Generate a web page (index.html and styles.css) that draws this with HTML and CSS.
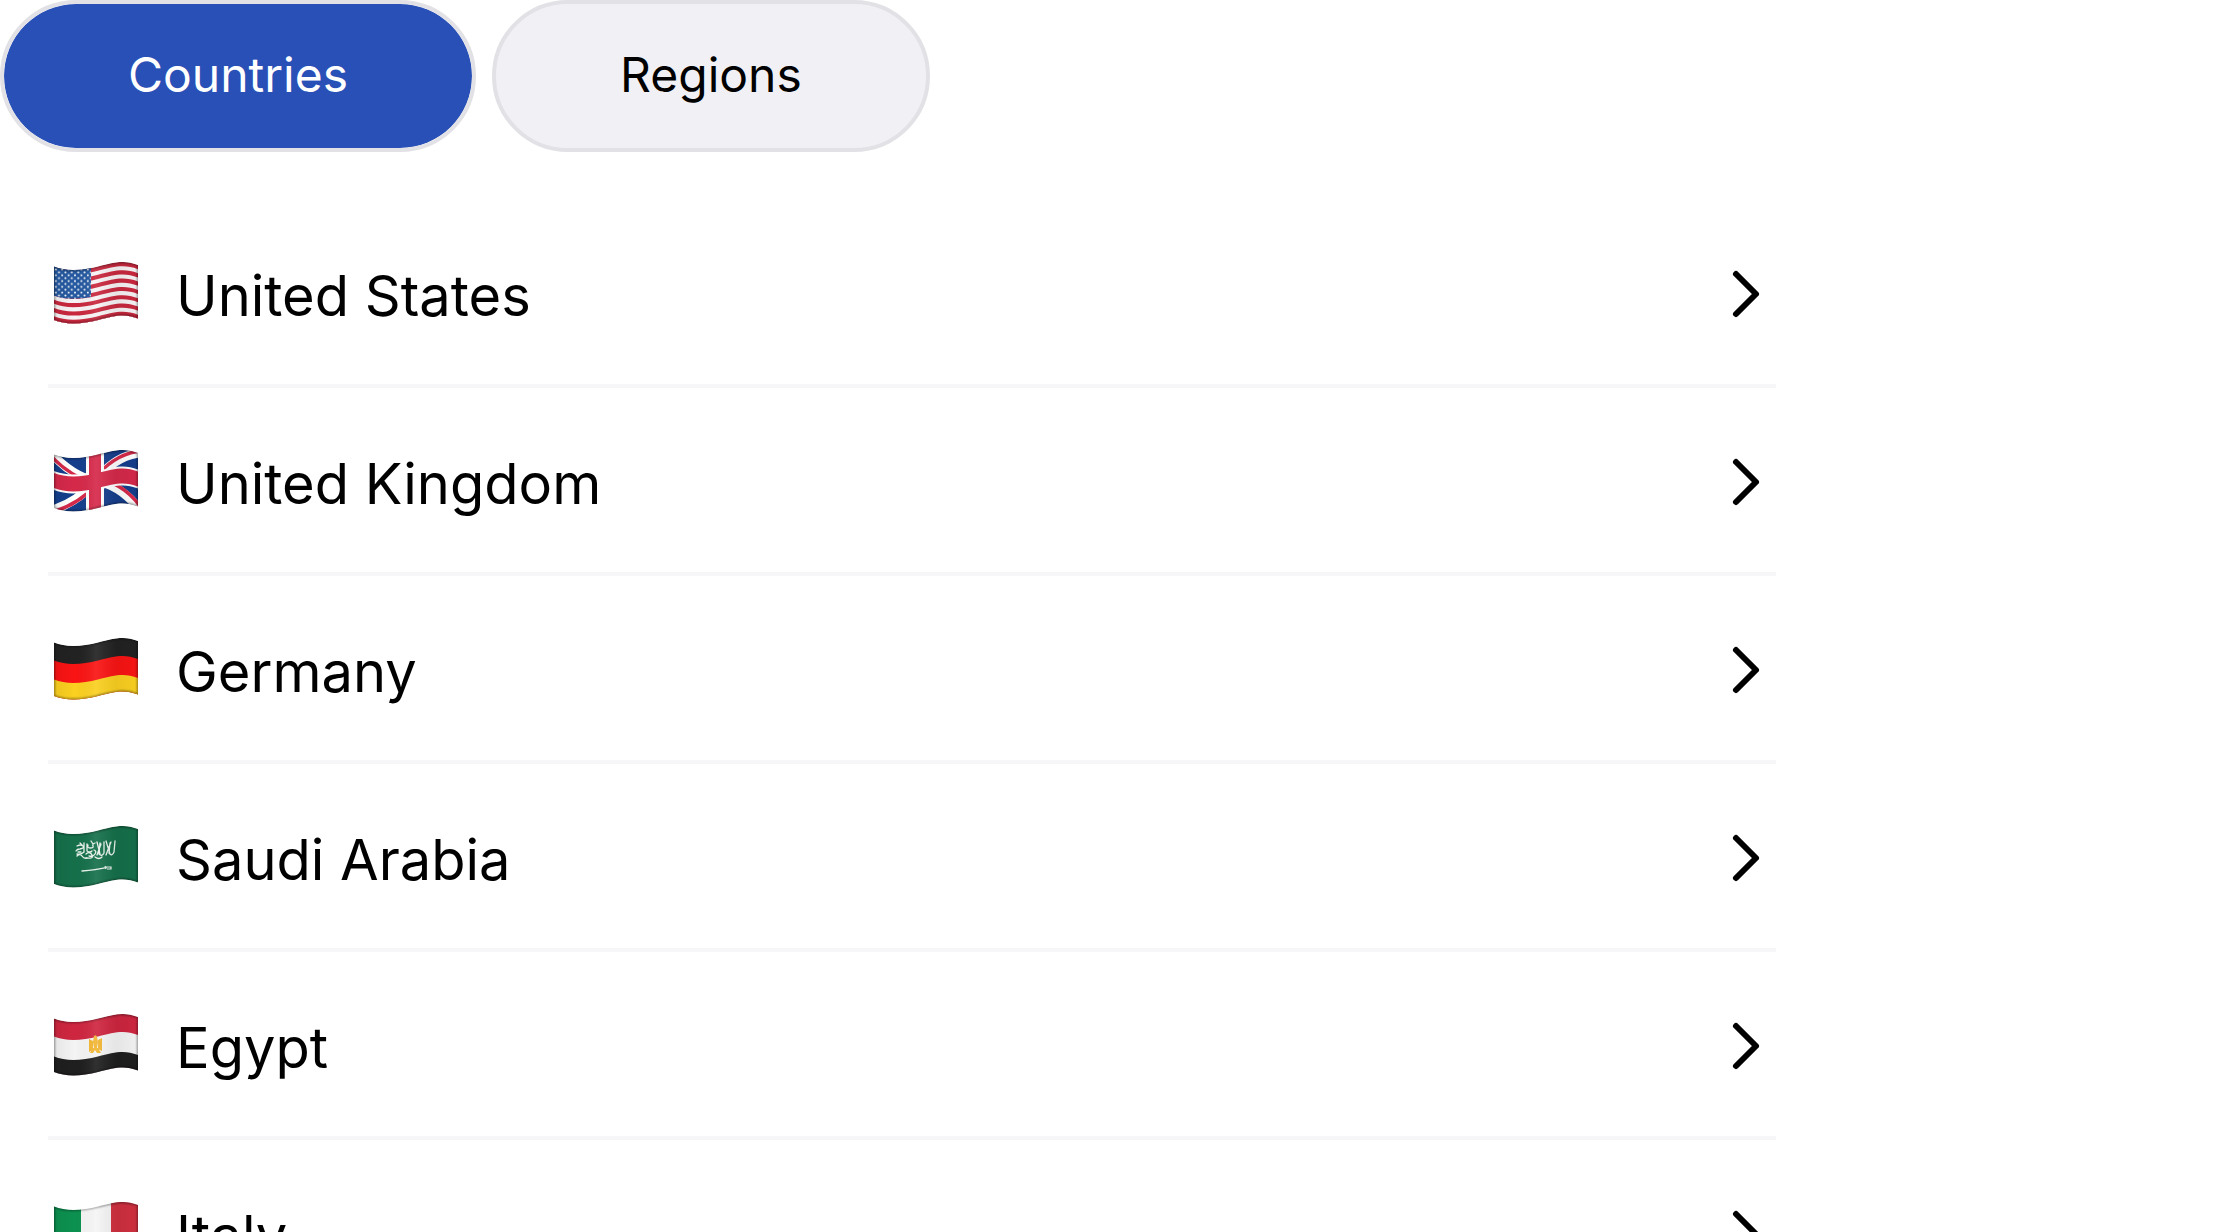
FILE: index.html
```html
<!DOCTYPE html>
<html lang="en">
<head>
    <meta charset="UTF-8">
    <meta name="viewport" content="width=device-width, initial-scale=1.0">
    <title>Countries</title>
    <link rel="stylesheet" href="styles.css">
</head>
<body>
    <!-- Shared shapes for the flags and arrows -->
    <svg class="defs" width="0" height="0" aria-hidden="true">
        <defs>
            <path id="wave" d="M6 12.500c12 5 28 4 44 0c16-4 26-7 40-1.5v53.500c-14-5.5-24-2.5-40 1.5c-16 4-32 5-44 0z"/>
            <clipPath id="flag-clip"><use href="#wave"/></clipPath>
            <linearGradient id="fold" x1="0" x2="1" y1="0" y2="0">
                <stop offset="0" stop-color="#000" stop-opacity="0.06"/>
                <stop offset="0.25" stop-color="#000" stop-opacity="0"/>
                <stop offset="0.5" stop-color="#fff" stop-opacity="0.08"/>
                <stop offset="0.75" stop-color="#000" stop-opacity="0.06"/>
                <stop offset="1" stop-color="#000" stop-opacity="0.02"/>
            </linearGradient>
            <filter id="soften"><feGaussianBlur stdDeviation="0.9"/></filter>
            <pattern id="stars" x="6" y="14" width="6.4" height="5.8" patternUnits="userSpaceOnUse">
                <circle cx="1.8" cy="1.5" r="1" fill="#fff"/>
                <circle cx="5" cy="4.4" r="1" fill="#fff"/>
            </pattern>
            <g id="shade">
                <use href="#wave" fill="url(#fold)"/>
                <use href="#wave" fill="none" stroke="#000" stroke-opacity="0.5" stroke-width="1.8" filter="url(#soften)"/>
            </g>
            <symbol id="chevron" viewBox="0 0 64 64">
                <path d="M24 12l20 20l-20 20" fill="none" stroke="#000" stroke-width="6" stroke-linecap="round" stroke-linejoin="round"/>
            </symbol>
        </defs>
    </svg>

    <div class="container">
        <div class="tabs">
            <button type="button" class="tab active">Countries</button>
            <button type="button" class="tab">Regions</button>
        </div>

        <ul class="country-list">
            <li>
                <a href="#us" class="country">
                    <svg class="flag" viewBox="0 0 96 80" aria-hidden="true">
                        <g clip-path="url(#flag-clip)">
                            <use href="#wave" fill="#c9283e"/>
                            <use href="#wave" y="4.15" fill="#f7f3f5"/>
                            <use href="#wave" y="8.3" fill="#c9283e"/>
                            <use href="#wave" y="12.45" fill="#f7f3f5"/>
                            <use href="#wave" y="16.6" fill="#c9283e"/>
                            <use href="#wave" y="20.75" fill="#f7f3f5"/>
                            <use href="#wave" y="24.9" fill="#c9283e"/>
                            <use href="#wave" y="29.05" fill="#f7f3f5"/>
                            <use href="#wave" y="33.2" fill="#c9283e"/>
                            <use href="#wave" y="37.35" fill="#f7f3f5"/>
                            <use href="#wave" y="41.5" fill="#c9283e"/>
                            <use href="#wave" y="45.65" fill="#f7f3f5"/>
                            <use href="#wave" y="49.8" fill="#c9283e"/>
                            <path d="M6 12c10 4 23 4 37 1.500v29.500c-14 2.5-27 2.5-37-1.5z" fill="#2458a0"/>
                            <path d="M6 12c10 4 23 4 37 1.500v29.500c-14 2.5-27 2.5-37-1.5z" fill="url(#stars)"/>
                            <use href="#shade"/>
                        </g>
                    </svg>
                    <span class="name">United States</span>
                    <svg class="arrow" aria-hidden="true"><use href="#chevron"/></svg>
                </a>
            </li>
            <li>
                <a href="#gb" class="country">
                    <svg class="flag" viewBox="0 0 96 80" aria-hidden="true">
                        <g clip-path="url(#flag-clip)">
                            <use href="#wave" fill="#153e8c"/>
                            <g fill="none" stroke="#fff" stroke-width="9">
                                <path d="M4 12Q24 34 47 39Q72 42 92 68"/>
                                <path d="M4 68Q28 61 47 40Q66 14 92 11"/>
                            </g>
                            <g fill="none" stroke="#d6294a" stroke-width="3.4">
                                <path d="M4 15Q22 34 47 42"/>
                                <path d="M47 36Q74 40 92 64"/>
                                <path d="M4 70Q30 63 49 42"/>
                                <path d="M45 38Q66 12 92 9"/>
                            </g>
                            <path d="M38 0h18v80h-18z" fill="#fff"/>
                            <path d="M6 29c12 5 28 4 44 0c16-4 26-7 40-1.5v19c-14-5.5-24-2.5-40 1.5c-16 4-32 5-44 0z" fill="#fff"/>
                            <path d="M6 31c12 5 28 4 44 0c16-4 26-7 40-1.5v15c-14-5.5-24-2.5-40 1.5c-16 4-32 5-44 0z" fill="#d6294a"/>
                            <path d="M41 0h12v80h-12z" fill="#d6294a"/>
                            <use href="#shade"/>
                        </g>
                    </svg>
                    <span class="name">United Kingdom</span>
                    <svg class="arrow" aria-hidden="true"><use href="#chevron"/></svg>
                </a>
            </li>
            <li>
                <a href="#de" class="country">
                    <svg class="flag" viewBox="0 0 96 80" aria-hidden="true">
                        <g clip-path="url(#flag-clip)">
                            <use href="#wave" fill="#222222"/>
                            <use href="#wave" y="18" fill="#fa1414"/>
                            <use href="#wave" y="37" fill="#fbd020"/>
                            <use href="#shade"/>
                        </g>
                    </svg>
                    <span class="name">Germany</span>
                    <svg class="arrow" aria-hidden="true"><use href="#chevron"/></svg>
                </a>
            </li>
            <li>
                <a href="#sa" class="country">
                    <svg class="flag" viewBox="0 0 96 80" aria-hidden="true">
                        <g clip-path="url(#flag-clip)">
                            <use href="#wave" fill="#15704a"/>
                            <!-- calligraphy emblem -->
                            <g fill="none" stroke="#e9f3ee" stroke-width="1.3" stroke-linecap="round">
                                <path d="M67 23l-1 11q-2 5-5 1l1-10M63 24l-5 13M58 23l4 13M56 24v11q-2 4-5 1l1-11M53 26l-4 11M49 24l3 12"/>
                                <path d="M47 25q-3 1-2 3t-3 2q-3 0-2-3M46 32q3 1 1 4t-6 2M43 23l2 3M39 26v7q3 2 5 0M38 36q4-3 6 1t-6 3"/>
                                <path d="M29 28q4-2 6 0t-3 3q-3 0-4 2M36 25v9q-3 3-7 2M29 38q3-3 5 0t5 2M32 25l2 2M30 34h3M47 39q4 3 7 0"/>
                            </g>
                            <path d="M34 53q14-1 24-3.400" fill="none" stroke="#e9f3ee" stroke-width="1.4" stroke-linecap="round"/>
                            <path d="M57 48l1 3M58 49h5v2h-4" fill="none" stroke="#e9f3ee" stroke-width="1.2"/>
                            <use href="#shade"/>
                        </g>
                    </svg>
                    <span class="name">Saudi Arabia</span>
                    <svg class="arrow" aria-hidden="true"><use href="#chevron"/></svg>
                </a>
            </li>
            <li>
                <a href="#eg" class="country">
                    <svg class="flag" viewBox="0 0 96 80" aria-hidden="true">
                        <g clip-path="url(#flag-clip)">
                            <use href="#wave" fill="#cf2640"/>
                            <use href="#wave" y="18" fill="#f4f4f4"/>
                            <use href="#wave" y="38" fill="#1f1f1f"/>
                            <!-- eagle -->
                            <g fill="#f2b632">
                                <path d="M41 33l4 2v9l-4 2zM54 32l-4 2v9l4 2z"/>
                                <path d="M46 30q2-2 3 1l1 5l-1 6h-3l-1-6z"/>
                                <path d="M45 42l-3 5h3l2-3l2 3h4l-3-5z"/>
                            </g>
                            <use href="#shade"/>
                        </g>
                    </svg>
                    <span class="name">Egypt</span>
                    <svg class="arrow" aria-hidden="true"><use href="#chevron"/></svg>
                </a>
            </li>
            <li>
                <a href="#it" class="country">
                    <svg class="flag" viewBox="0 0 96 80" aria-hidden="true">
                        <g clip-path="url(#flag-clip)">
                            <use href="#wave" fill="#f5f5f5"/>
                            <path d="M6 0h27v80h-27z" fill="#0c9150"/>
                            <path d="M63 0h27v80h-27z" fill="#d03040"/>
                            <use href="#shade"/>
                        </g>
                    </svg>
                    <span class="name">Italy</span>
                    <svg class="arrow" aria-hidden="true"><use href="#chevron"/></svg>
                </a>
            </li>
        </ul>
    </div>
</body>
</html>
```
FILE: styles.css
```css
* {
    box-sizing: border-box;
}

body {
    height: 100vh;
    margin: 0;
    overflow: hidden;
    background: #fff;
    color: #000;
    font-family: Inter, "Liberation Sans", sans-serif;
}

.defs {
    position: absolute;
}

.container {
    width: 100%;
    max-width: 1824px;
}

.tabs {
    display: flex;
    gap: 16px;
}

.tab {
    padding: 39px 124px 41px;
    border: 4px solid #e2e2e6;
    border-radius: 76px;
    background: #f1f0f5;
    color: #000;
    font-family: inherit;
    font-size: 48px;
    line-height: 64px;
    cursor: pointer;
}

.tab.active {
    background: #2850b7;
    background-clip: padding-box;
    color: #fff;
}

.country-list {
    margin: 48px 0 0;
    padding: 0 48px;
    list-style: none;
}

.country {
    display: flex;
    align-items: center;
    gap: 32px;
    padding: 52px 0 48px;
    border-bottom: 4px solid #f6f6f8;
    color: inherit;
    text-decoration: none;
}

.flag {
    width: 96px;
    height: 80px;
}

.name {
    flex: 1;
    padding-top: 4px;
    font-size: 56px;
    line-height: 80px;
}

.arrow {
    width: 64px;
    height: 64px;
}
```
